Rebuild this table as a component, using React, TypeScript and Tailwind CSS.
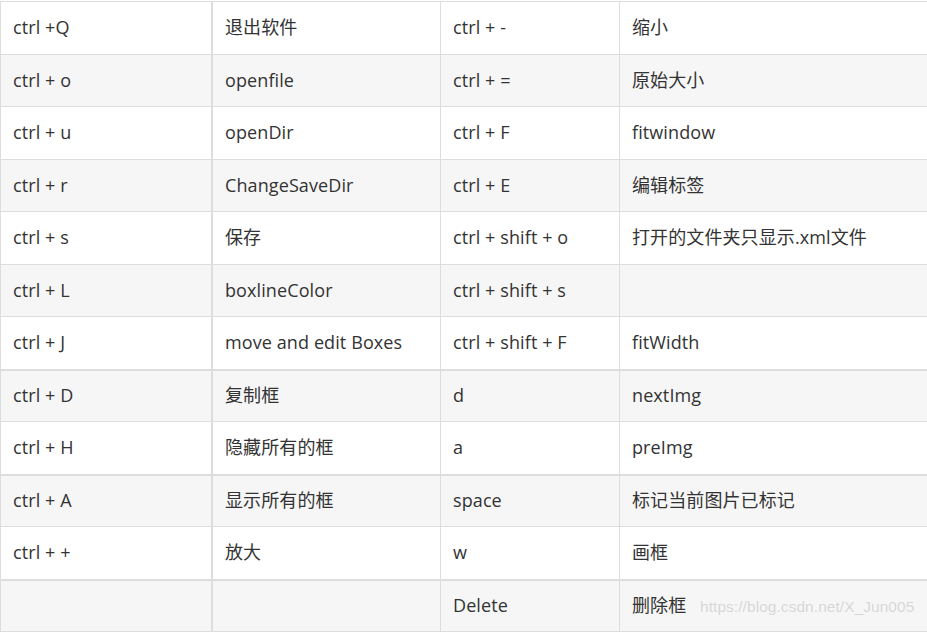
const rows: [string, string, string, string][] = [
  ["ctrl +Q", "退出软件", "ctrl + -", "缩小"],
  ["ctrl + o", "openfile", "ctrl + =", "原始大小"],
  ["ctrl + u", "openDir", "ctrl + F", "fitwindow"],
  ["ctrl + r", "ChangeSaveDir", "ctrl + E", "编辑标签"],
  ["ctrl + s", "保存", "ctrl + shift + o", "打开的文件夹只显示.xml文件"],
  ["ctrl + L", "boxlineColor", "ctrl + shift + s", ""],
  ["ctrl + J", "move and edit Boxes", "ctrl + shift + F", "fitWidth"],
  ["ctrl + D", "复制框", "d", "nextImg"],
  ["ctrl + H", "隐藏所有的框", "a", "preImg"],
  ["ctrl + A", "显示所有的框", "space", "标记当前图片已标记"],
  ["ctrl + +", "放大", "w", "画框"],
  ["", "", "Delete", "删除框"],
];

// rows whose top line is drawn a bit heavier in the screenshot
const thick = [7, 9, 11];

export default function App() {
  return (
    <div
      className="relative w-[927px] h-[633px] overflow-hidden bg-white pt-px text-[18px] tracking-[0.1px] text-[#333]"
      style={{ fontFamily: '"Open Sans", "Noto Sans CJK SC", sans-serif' }}
    >
      <div className="border-b border-[#ddd]">
        {rows.map((r, i) => (
          <div
            key={i}
            className={`grid grid-cols-[213px_228px_179px_307px] h-[52.5px] border-[#ddd] ${
              thick.includes(i) ? "border-t-2" : "border-t"
            } ${i % 2 === 1 ? "bg-[#f6f6f6]" : "bg-white"}`}
          >
            <div className="flex items-center pl-3 border-l border-r-2 border-[#ddd]">{r[0]}</div>
            <div className="flex items-center pl-3 border-r border-[#ddd]">{r[1]}</div>
            <div className="flex items-center pl-3 border-r border-[#ddd]">{r[2]}</div>
            <div className="flex items-center pl-3">{r[3]}</div>
          </div>
        ))}
      </div>

      {/* 水印 */}
      <div
        className="absolute left-[700px] top-[597px] text-[15.4px] leading-[20px] text-[#d6d6d6]"
        style={{ fontFamily: '"Liberation Sans", Arial, sans-serif', textShadow: "0 0 1px #fff" }}
      >
        https://blog.csdn.net/X_Jun005
      </div>
    </div>
  );
}
